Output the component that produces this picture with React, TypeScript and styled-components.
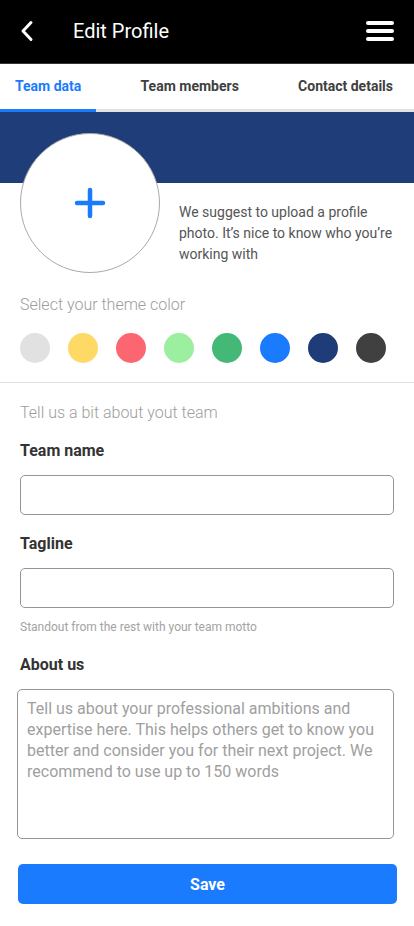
import React from "react";
import styled, { createGlobalStyle } from "styled-components";

const Global = createGlobalStyle`
  html, body { margin: 0; padding: 0; background: #fff; }
  body { font-family: Roboto, "Noto Sans", "Liberation Sans", sans-serif; }
  * { box-sizing: border-box; }
`;

const Page = styled.div`
  width: 414px;
  min-height: 926px;
  background: #fff;
`;

const Header = styled.header`
  height: 64px;
  background: #000;
  border-bottom: 1px solid #363636;
  display: flex;
  align-items: center;
  padding: 0 20px 1px 20px;
`;

const IconButton = styled.button`
  background: none;
  border: 0;
  padding: 0;
  display: flex;
  align-items: center;
  justify-content: center;
  cursor: pointer;
`;

const Title = styled.h1`
  margin: 0 0 0 39px;
  flex: 1;
  font-size: 20px;
  font-weight: 400;
  color: #fff;
  line-height: 24px;
`;

const Tabs = styled.nav`
  display: flex;
  justify-content: space-between;
  padding-right: 6px;
  border-bottom: 3px solid #e3e3e3;
`;

const Tab = styled.div<{ $active?: boolean }>`
  height: 48px;
  margin-bottom: -3px;
  padding: 0 15px 2px 15px;
  display: flex;
  align-items: center;
  font-size: 14px;
  font-weight: 700;
  color: ${(p) => (p.$active ? "#1a7bff" : "#404040")};
  border-bottom: 3px solid ${(p) => (p.$active ? "#1a7bff" : "transparent")};
`;

const ProfileSection = styled.section`
  background: linear-gradient(#1f3d78 0, #1f3d78 71px, #fff 71px);
  padding: 21px 20px 0 20px;
`;

const PhotoRow = styled.div`
  display: flex;
  align-items: flex-start;
  gap: 19px;
`;

const PhotoCircle = styled.button`
  width: 140px;
  height: 140px;
  flex: none;
  border-radius: 50%;
  border: 1px solid #a9a9a9;
  background: #fff;
  display: flex;
  align-items: center;
  justify-content: center;
  padding: 0;
  cursor: pointer;
`;

const PhotoHint = styled.p`
  margin: 69px 0 0 0;
  font-size: 14px;
  line-height: 21px;
  color: #555;
`;

const MutedLabel = styled.p<{ $top: number }>`
  margin: ${(p) => p.$top}px 0 0 0;
  font-size: 16px;
  font-weight: 300;
  line-height: 19px;
  color: #9d9d9d;
`;

const Swatches = styled.div`
  display: flex;
  gap: 18px;
  margin-top: 19px;
`;

const Swatch = styled.button<{ $color: string }>`
  width: 30px;
  height: 30px;
  border-radius: 50%;
  border: 0;
  padding: 0;
  background: ${(p) => p.$color};
  cursor: pointer;
`;

const Divider = styled.hr`
  margin: 19px 0 0 0;
  border: 0;
  border-top: 1px solid #e3e3e3;
`;

const FormSection = styled.section`
  padding: 0 20px 40px 20px;
  display: flex;
  flex-direction: column;
`;

const FieldLabel = styled.label<{ $top: number }>`
  margin-top: ${(p) => p.$top}px;
  font-size: 16px;
  font-weight: 700;
  line-height: 19px;
  color: #333;
`;

const TextInput = styled.input<{ $top: number }>`
  margin-top: ${(p) => p.$top}px;
  height: 40px;
  width: 100%;
  border: 1px solid #959595;
  border-radius: 5px;
  padding: 0 10px;
  font-family: inherit;
  font-size: 16px;
  outline: none;
`;

const Helper = styled.p`
  margin: 12px 0 0 0;
  font-size: 12px;
  line-height: 14px;
  color: #a3a3a3;
`;

const TextArea = styled.textarea`
  margin: 15px 0 0 -3px;
  width: calc(100% + 3px);
  height: 150px;
  border: 1px solid #959595;
  border-radius: 5px;
  padding: 8px 9px;
  font-family: inherit;
  font-size: 16px;
  line-height: 21px;
  resize: none;
  outline: none;
  &::placeholder { color: #a0a0a0; }
`;

const SaveButton = styled.button`
  margin: 25px -3px 0 -2px;
  height: 40px;
  border: 0;
  border-radius: 5px;
  background: #1a7bff;
  color: #fff;
  font-family: inherit;
  font-size: 16px;
  font-weight: 700;
  cursor: pointer;
`;

const colors = ["#e1e1e1", "#ffd966", "#fc6670", "#9bef9f", "#44b876", "#1a7bff", "#1e3c78", "#404040"];

export default function App() {
  return (
    <Page>
      <Global />
      <Header>
        <IconButton aria-label="Back">
          <svg width="14" height="22" viewBox="0 0 14 22">
            <path d="M11 2.5 L3 11 L11 19.5" fill="none" stroke="#fff" strokeWidth="3" strokeLinecap="round" strokeLinejoin="round" />
          </svg>
        </IconButton>
        <Title>Edit Profile</Title>
        <IconButton aria-label="Menu">
          <svg width="28" height="20" viewBox="0 0 28 20">
            <rect x="0" y="0" width="28" height="4" rx="2" fill="#fff" />
            <rect x="0" y="8" width="28" height="4" rx="2" fill="#fff" />
            <rect x="0" y="16" width="28" height="4" rx="2" fill="#fff" />
          </svg>
        </IconButton>
      </Header>
      <Tabs>
        <Tab $active>Team data</Tab>
        <Tab>Team members</Tab>
        <Tab>Contact details</Tab>
      </Tabs>
      <ProfileSection>
        <PhotoRow>
          <PhotoCircle aria-label="Upload photo">
            <svg width="32" height="32" viewBox="0 0 32 32">
              <path d="M16 3 V29 M3 16 H29" stroke="#1a7bff" strokeWidth="4.5" strokeLinecap="round" />
            </svg>
          </PhotoCircle>
          <PhotoHint>We suggest to upload a profile photo. It’s nice to know who you’re working with</PhotoHint>
        </PhotoRow>
        <MutedLabel $top={22}>Select your theme color</MutedLabel>
        <Swatches>
          {colors.map((c) => (
            <Swatch key={c} $color={c} aria-label={c} />
          ))}
        </Swatches>
      </ProfileSection>
      <Divider />
      <FormSection>
        <MutedLabel $top={20}>Tell us a bit about yout team</MutedLabel>
        <FieldLabel $top={19}>Team name</FieldLabel>
        <TextInput $top={15} />
        <FieldLabel $top={19}>Tagline</FieldLabel>
        <TextInput $top={15} />
        <Helper>Standout from the rest with your team motto</Helper>
        <FieldLabel $top={21}>About us</FieldLabel>
        <TextArea placeholder="Tell us about your professional ambitions and expertise here. This helps others get to know you better and consider you for their next project. We recommend to use up to 150 words" />
        <SaveButton>Save</SaveButton>
      </FormSection>
    </Page>
  );
}
